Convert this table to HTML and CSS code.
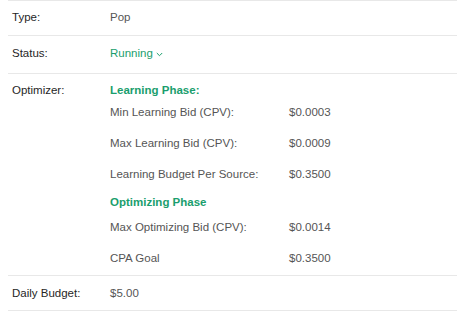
FILE: index.html
```html
<!DOCTYPE html>
<html lang="en">
<head>
<meta charset="utf-8">
<title>Campaign details</title>
<link rel="stylesheet" href="styles.css">
</head>
<body>
<div class="details">
  <div class="row">
    <div class="label">Type:</div>
    <div class="value">Pop</div>
  </div>
  <div class="row row-status">
    <div class="label">Status:</div>
    <div class="value status">Running
      <svg class="chev" width="7" height="5" viewBox="0 0 7 5"><path d="M0.8 1 L3.5 3.7 L6.2 1" fill="none" stroke="currentColor" stroke-width="1"/></svg>
    </div>
  </div>
  <div class="row row-opt">
    <div class="label">Optimizer:</div>
    <div class="value">
      <div class="phase">Learning Phase:</div>
      <div class="sub"><span class="sub-label">Min Learning Bid (CPV):</span><span>$0.0003</span></div>
      <div class="sub"><span class="sub-label">Max Learning Bid (CPV):</span><span>$0.0009</span></div>
      <div class="sub"><span class="sub-label">Learning Budget Per Source:</span><span>$0.3500</span></div>
      <div class="phase phase-2">Optimizing Phase</div>
      <div class="sub"><span class="sub-label">Max Optimizing Bid (CPV):</span><span>$0.0014</span></div>
      <div class="sub"><span class="sub-label">CPA Goal</span><span>$0.3500</span></div>
    </div>
  </div>
  <div class="row row-last">
    <div class="label">Daily Budget:</div>
    <div class="value">$5.00</div>
  </div>
</div>
</body>
</html>
```
FILE: styles.css
```css
html, body {
  background: #fff;
}
body {
  margin: 0 8px;
  font-family: "Liberation Sans", Arial, sans-serif;
  font-size: 11.5px;
  line-height: 15px;
  color: #555;
}
.details {
  width: 449px;
}
.row {
  display: grid;
  grid-template-columns: 102px 1fr;
  border-top: 1px solid #e8e8e8;
  padding: 9px 0 10px;
}
.row-status {
  padding: 10px 0 12px;
}
.row-opt {
  padding: 9px 0 0;
}
.row-last {
  padding: 10px 0 9px;
  border-bottom: 1px solid #e8e8e8;
}
.label {
  padding-left: 4px;
  color: #262626;
}
.status {
  color: #1a9e6d;
  display: flex;
  align-items: center;
  gap: 3px;
}
.chev {
  display: block;
  margin-top: 1px;
}
.phase {
  color: #1a9e6d;
  font-weight: bold;
}
.phase-2 {
  margin: 4px 0 3px;
}
.sub {
  display: grid;
  grid-template-columns: 179px 1fr;
  padding: 7px 0 9px;
}
```
